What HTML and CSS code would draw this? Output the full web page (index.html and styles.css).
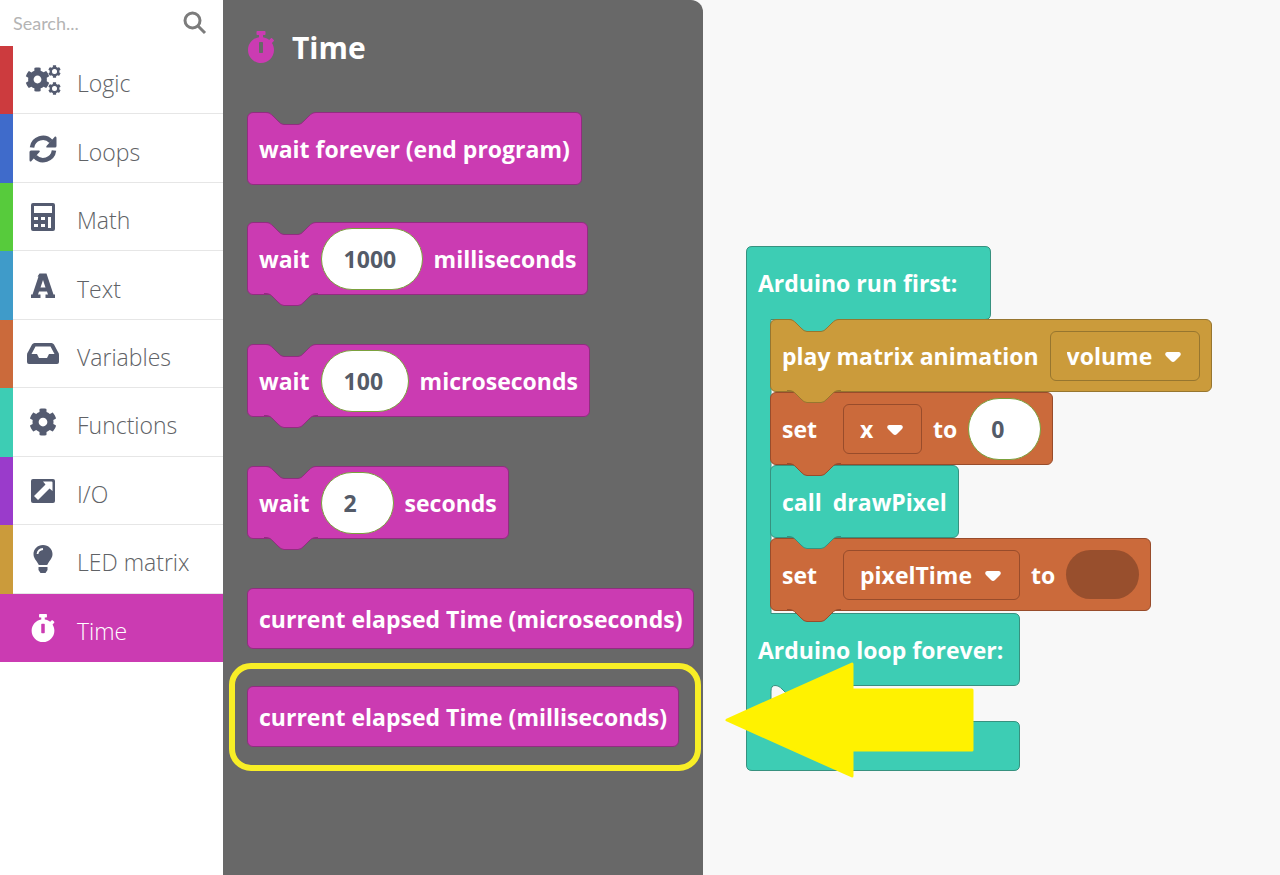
FILE: index.html
```html
<!DOCTYPE html>
<html lang="en">
<head>
<meta charset="utf-8">
<title>Block editor</title>
<link rel="stylesheet" href="styles.css">
</head>
<body>
<svg class="defs" aria-hidden="true">
  <symbol id="cog" viewBox="0 0 512 512"><path fill-rule="evenodd" d="M487.4 315.7l-42.6-24.6c4.3-23.2 4.3-47 0-70.2l42.6-24.6c4.9-2.8 7.1-8.6 5.5-14-11.1-35.6-30-67.8-54.7-94.6-3.8-4.1-10-5.1-14.8-2.3L380.8 110c-17.9-15.4-38.5-27.3-60.8-35.1V25.8c0-5.6-3.9-10.5-9.4-11.7-36.7-8.2-74.3-7.8-109.2 0-5.5 1.2-9.4 6.1-9.4 11.7V75c-22.2 7.9-42.8 19.8-60.8 35.1L88.7 85.5c-4.9-2.8-11-1.9-14.8 2.3-24.7 26.7-43.6 58.9-54.7 94.6-1.7 5.4.6 11.2 5.5 14L67.3 221c-4.3 23.2-4.3 47 0 70.2l-42.6 24.6c-4.9 2.8-7.1 8.6-5.5 14 11.1 35.6 30 67.8 54.7 94.6 3.8 4.1 10 5.1 14.8 2.3l42.6-24.6c17.9 15.4 38.5 27.3 60.8 35.1v49.2c0 5.6 3.9 10.5 9.4 11.7 36.7 8.2 74.3 7.8 109.2 0 5.5-1.2 9.4-6.1 9.4-11.7v-49.2c22.2-7.9 42.8-19.8 60.8-35.1l42.6 24.6c4.9 2.8 11 1.9 14.8-2.3 24.7-26.7 43.6-58.9 54.7-94.6 1.5-5.5-.7-11.3-5.6-14.1zM256 336c-44.1 0-80-35.9-80-80s35.9-80 80-80 80 35.9 80 80-35.9 80-80 80z"/></symbol>
  <symbol id="stopwatch" viewBox="0 0 448 512"><path fill-rule="evenodd" d="M432 304c0 114.900-93.100 208-208 208S16 418.900 16 304c0-104 76.300-190.200 176-205.500V64h-28c-6.600 0-12-5.400-12-12V12c0-6.600 5.400-12 12-12h120c6.600 0 12 5.400 12 12v40c0 6.600-5.400 12-12 12h-28v34.500c37.500 5.800 71.700 21.600 99.700 44.600l27.500-27.500c4.700-4.700 12.300-4.700 17 0l28.300 28.300c4.700 4.700 4.700 12.300 0 17l-29.400 29.400-.6.6C419.700 223.300 432 262.200 432 304zm-176 36V188.500c0-6.600-5.400-12-12-12h-40c-6.600 0-12 5.400-12 12V340c0 6.600 5.400 12 12 12h40c6.600 0 12-5.400 12-12z"/></symbol>
  <symbol id="notch" viewBox="0 0 54 14"><path d="M0 0H2C5 0 7 2 9 4L14 9Q17 12.500 20 12.500H34Q37 12.500 40 9L45 4C47 2 49 .5 52 .5H54V0Z" stroke="none"/><path fill="none" d="M0 .5H2C5 .5 7 2 9 4L14 9Q17 12.500 20 12.500H34Q37 12.500 40 9L45 4C47 2 49 .5 52 .5H54"/></symbol>
  <symbol id="caret" viewBox="0 0 16 10"><path d="M2 0H14Q17 1 15 4L10 9Q8 11 6 9L1 4Q-1 1 2 0Z"/></symbol>
</svg>
<main class="editor">
  <aside class="toolbox">
    <label class="search">
      <input type="text" placeholder="Search..." aria-label="Search">
      <svg class="search-icon" viewBox="0 0 24 24" aria-hidden="true"><circle cx="9.500" cy="9.500" r="7.500"/><path d="M15 15L22 22"/></svg>
    </label>
    <nav class="categories">
      <a class="category red" href="#"><svg class="icon wide" viewBox="0 0 36 28"><use href="#cog" x="0" y="1" width="25" height="25"/><use href="#cog" x="23" y="-1" width="13" height="13"/><use href="#cog" x="23" y="16" width="13" height="13"/><circle cx="29.500" cy="5.500" r="2.500" fill="#fff"/><circle cx="29.500" cy="22.500" r="2.500" fill="#fff"/></svg><span>Logic</span></a>
      <a class="category blue" href="#"><svg class="icon" viewBox="0 0 28 28"><path fill="none" stroke="#545b70" stroke-width="4.500" d="M3 12.500A11 11 0 0 1 22 6.500M25 15.500A11 11 0 0 1 6 21.500"/><path d="M26 1.500Q27.500 1 27.500 3V11Q27.500 12.500 26 12.500H18Q16.500 12.500 17.500 11ZM2 26.500Q.5 27 .5 25V17Q.5 15.500 2 15.500H10Q11.500 15.500 10.500 17Z"/></svg><span>Loops</span></a>
      <a class="category green" href="#"><svg class="icon" viewBox="0 0 28 28"><path fill-rule="evenodd" d="M4 0H24Q26 0 26 2V26Q26 28 24 28H4Q2 28 2 26V2Q2 0 4 0ZM5 3V10H23V3ZM5 14V17H9V14ZM12 14V17H16V14ZM19 14V25H22V14ZM5 21V24H9V21ZM12 21V24H16V21Z"/></svg><span>Math</span></a>
      <a class="category sky" href="#"><svg class="icon" viewBox="0 0 28 28"><path fill-rule="evenodd" d="M10.500 1.500H17.500L24.500 22.500H26V26H16.500V22.500H19L18 19.500H10L9 22.500H11.500V26H2V22.500H3.500L9.500 4.500H8.500ZM11.500 15.500H16.500L14 8Z"/></svg><span>Text</span></a>
      <a class="category orange" href="#"><svg class="icon wide" viewBox="0 0 36 28"><path fill-rule="evenodd" d="M9.500 3H26.500Q28 3 29 4.500L33 12Q34 13 34 15V22Q34 24 32 24H4Q2 24 2 22V15Q2 13 3 12L7 4.500Q8 3 9.500 3ZM10.500 6.500L6.500 14H12L14 18H22L24 14H29.500L25.500 6.500Z"/></svg><span>Variables</span></a>
      <a class="category teal" href="#"><svg class="icon"><use href="#cog"/></svg><span>Functions</span></a>
      <a class="category purple" href="#"><svg class="icon" viewBox="0 0 28 28"><rect x="2" y="2" width="24" height="24" rx="2"/><path fill="#fff" d="M14 4.500H22.500Q23.500 4.500 23.500 5.500V14L20.500 11.500L9 23L5 19L16.500 7.500Z"/></svg><span>I/O</span></a>
      <a class="category gold" href="#"><svg class="icon" viewBox="0 0 28 28"><path d="M14 0C8.500 0 4.500 4 4.500 9C4.500 13 7 15 9 18.500Q9.500 20 10.500 20H17.500Q18.500 20 19 18.500C21 15 23.500 13 23.500 9C23.500 4 19.500 0 14 0ZM9.500 22H18.500V25L16.500 28H11.500L9.500 25Z"/><path fill="none" stroke="#fff" stroke-width="1.800" d="M8.500 9Q9 4.500 14 4"/></svg><span>LED matrix</span></a>
      <a class="category magenta active" href="#" aria-current="true"><svg class="icon"><use href="#stopwatch"/></svg><span>Time</span></a>
    </nav>
  </aside>

  <section class="flyout">
    <h1 class="flyout-title"><svg class="title-icon" aria-hidden="true"><use href="#stopwatch"/></svg>Time</h1>
    <div class="block magenta notched"><svg class="notch"><use href="#notch"/></svg><span>wait forever (end program)</span></div>
    <div class="block magenta notched tabbed"><svg class="notch"><use href="#notch"/></svg><label for="ms">wait</label><input class="pill digits-4" id="ms" value="1000"><span>milliseconds</span><svg class="tab"><use href="#notch"/></svg></div>
    <div class="block magenta notched tabbed"><svg class="notch"><use href="#notch"/></svg><label for="us">wait</label><input class="pill digits-3" id="us" value="100"><span>microseconds</span><svg class="tab"><use href="#notch"/></svg></div>
    <div class="block magenta notched tabbed"><svg class="notch"><use href="#notch"/></svg><label for="s">wait</label><input class="pill" id="s" value="2"><span>seconds</span><svg class="tab"><use href="#notch"/></svg></div>
    <div class="block magenta value"><span>current elapsed Time (microseconds)</span></div>
    <div class="block magenta value highlighted"><span>current elapsed Time (milliseconds)</span></div>
  </section>

  <section class="workspace">
    <div class="program">
      <svg class="frame" viewBox="0 0 275 526" aria-hidden="true"><path d="M6 .5H239Q244.500 .5 244.500 6V68Q244.500 73.500 239 73.500H25V367.500H268Q273.500 367.500 273.500 373V433Q273.500 439.500 268 439.500H79C76 439.500 74 441 72 443L67 448Q64 451.500 61 451.500H47Q44 451.500 41 448L36 443C34 441 32 439.500 29 439.500Q25 439.500 25 445V470Q25 475.500 30 475.500H268Q273.500 475.500 273.500 481V519Q273.500 524.500 268 524.500H6Q.5 524.500 .5 519V6Q.5 .5 6 .5Z"/></svg>
      <p class="hat">Arduino run first:</p>
      <div class="stack">
        <div class="block gold notched tabbed"><svg class="notch from-teal"><use href="#notch"/></svg><label for="anim">play matrix animation</label><span class="dropdown"><select class="w-volume" id="anim"><option>volume</option></select><svg class="caret"><use href="#caret"/></svg></span><svg class="tab"><use href="#notch"/></svg></div>
        <div class="block orange notched tabbed"><label class="set" for="var-x">set</label><span class="dropdown"><select class="w-x" id="var-x"><option>x</option></select><svg class="caret"><use href="#caret"/></svg></span><label for="zero">to</label><input class="pill" id="zero" value="0"><svg class="tab"><use href="#notch"/></svg></div>
        <div class="block teal notched tabbed"><span>call</span><span>drawPixel</span><svg class="tab"><use href="#notch"/></svg></div>
        <div class="block orange notched tabbed"><label class="set" for="var-p">set</label><span class="dropdown"><select class="w-pixel" id="var-p"><option>pixelTime</option></select><svg class="caret"><use href="#caret"/></svg></span><span>to</span><span class="socket"></span><svg class="tab"><use href="#notch"/></svg></div>
      </div>
      <p class="hat">Arduino loop forever:</p>
      <svg class="arrow" viewBox="0 0 250 116" aria-hidden="true"><path d="M2 58L127 2V28H247V88H127V114Z"/></svg>
    </div>
  </section>
</main>
</body>
</html>
```
FILE: styles.css
```css
* { box-sizing: border-box; }
body {
  margin: 0;
  background: #f8f8f8;
  font-family: "Open Sans", "Noto Sans", sans-serif;
}
.defs { position: absolute; width: 0; height: 0; }
.editor { display: flex; min-height: 100vh; }

.toolbox { flex: none; width: 223px; background: #fff; }
.search { display: flex; align-items: center; height: 46px; padding: 0 16px 0 13px; }
.search input {
  flex: 1;
  min-width: 0;
  padding: 0;
  border: 0;
  outline: 0;
  background: none;
  font: 18px Lato, sans-serif;
}
.search input::placeholder { color: #b4b4b4; opacity: 1; }
.search-icon { width: 24px; height: 24px; fill: none; stroke: #7c7c7c; stroke-width: 3; }
.categories { display: grid; grid-auto-rows: 1fr; height: 616px; }
.category {
  display: grid;
  grid-template-columns: 60px 1fr;
  align-items: center;
  column-gap: 4px;
  border-left: 13px solid var(--tone);
  box-shadow: inset 0 -1px #e6e6e6;
  color: #606266;
  font-size: 23px;
  font-weight: 300;
  text-decoration: none;
}
.category span { padding-top: 6px; }
.icon { justify-self: center; width: 28px; height: 28px; overflow: visible; fill: #545b70; }
.icon.wide { width: 36px; }
.active { box-shadow: none; background: var(--tone); color: #fff; }
.active .icon { fill: #fff; }

.red { --tone: #cc3b3e; }
.blue { --tone: #3f6bcb; }
.green { --tone: #57cb3c; }
.sky { --tone: #3f9bc9; }
.orange { --tone: #cb6a3b; --edge: #984c2b; }
.teal { --tone: #3dcdb4; --edge: #37917f; }
.purple { --tone: #9a3bcb; }
.gold { --tone: #cb9b3b; --edge: #97762f; }
.magenta { --tone: #cb3bb2; --edge: #912d80; }

.flyout {
  display: flex;
  flex: none;
  flex-direction: column;
  align-items: flex-start;
  gap: 37px;
  width: 480px;
  padding: 23px 10px 24px 24px;
  border-radius: 0 12px 0 0;
  background: #686868;
}
.flyout-title {
  display: flex;
  align-items: center;
  gap: 17px;
  height: 48px;
  margin: 0 0 4px;
  color: #fff;
  font-size: 30px;
}
.title-icon { width: 28px; height: 32px; fill: #cb3bb2; }

.block {
  position: relative;
  display: flex;
  flex: none;
  align-items: center;
  gap: 11px;
  width: max-content;
  height: 73px;
  padding: 0 11px;
  border: 1px solid var(--edge);
  border-radius: 6px;
  background: var(--tone);
  color: #fff;
  font-size: 23px;
  font-weight: 700;
  white-space: nowrap;
}
.value { height: 61px; }
.flyout .tabbed { margin-bottom: 12px; }
.notch, .tab { position: absolute; left: 16px; width: 54px; height: 14px; stroke: var(--edge); }
.notch { top: -1px; fill: #686868; }
.notch.from-teal { fill: #3dcdb4; }
.tab { z-index: 1; top: calc(100% - 1px); fill: var(--tone); }
.highlighted::after {
  content: "";
  position: absolute;
  inset: -24px -23px -25px -19px;
  border: 6px solid #f8ee26;
  border-radius: 22px;
}
.pill {
  width: 73px;
  height: 62px;
  padding: 0 0 0 22px;
  border: 1px solid #7ba13d;
  border-radius: 31px;
  background: #fff;
  color: #545b68;
  font: inherit;
}
.digits-4 { width: 102px; }
.digits-3 { width: 88px; }

.workspace { flex: 1; min-width: 0; padding: 246px 24px 24px 43px; }
.program { position: relative; width: max-content; }
.frame { position: absolute; top: 0; left: 0; width: 275px; height: 526px; fill: #3dcdb4; stroke: #37917f; }
.hat {
  position: relative;
  display: flex;
  align-items: center;
  height: 73px;
  margin: 0;
  padding-left: 12px;
  color: #fff;
  font-size: 23px;
  font-weight: 700;
}
.stack { position: relative; padding: 0 0 2px 24px; }
.set { margin-right: 15px; }
.dropdown { position: relative; display: flex; }
.dropdown select {
  height: 50px;
  padding: 0 0 0 16px;
  border: 1px solid var(--edge);
  border-radius: 6px;
  appearance: none;
  background: none;
  color: #fff;
  font: inherit;
}
.w-volume { width: 150px; }
.w-x { width: 79px; }
.w-pixel { width: 177px; }
.caret { position: absolute; top: 21px; right: 19px; width: 16px; height: 10px; fill: #fff; pointer-events: none; }
.socket { width: 73px; height: 49px; border-radius: 25px; background: #984f2d; }
.arrow {
  position: absolute;
  top: 416px;
  left: -21px;
  width: 250px;
  height: 116px;
  fill: #fff200;
  stroke: #fff200;
  stroke-width: 3;
  stroke-linejoin: round;
}
```
